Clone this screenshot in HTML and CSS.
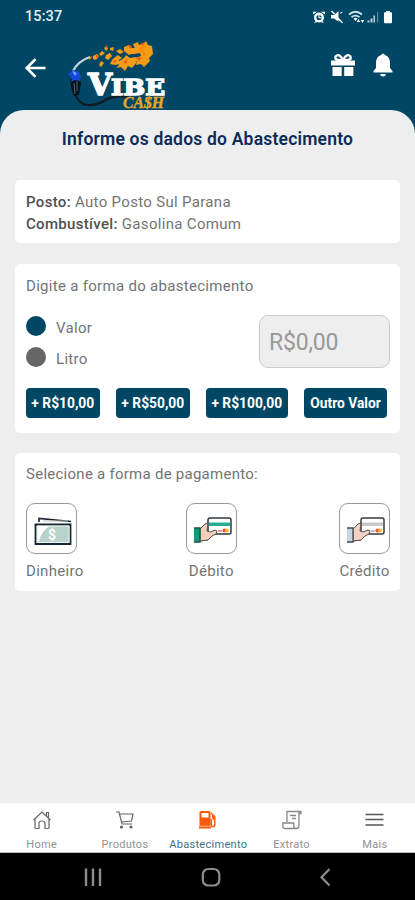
FILE: index.html
```html
<!DOCTYPE html>
<html lang="pt-BR">
<head>
<meta charset="utf-8">
<title>Vibe Cash</title>
<link rel="stylesheet" href="styles.css">
</head>
<body>
<div class="app">
  <header class="header">
    <div class="status">
      <span class="clock">15:37</span>
      <svg class="status-icons" width="82" height="16" viewBox="0 0 82 16" fill="#fff">
        <circle cx="6" cy="8.5" r="3.8" fill="none" stroke="#fff" stroke-width="2.4"/>
        <path d="M0 5.500V2.800h4zM12 5.500V2.800H8zM1 14l2-2.500 1.500 1.500zM11 14l-2-2.500L7.500 13zM5.500 6h1v2.300h2v1h-3z"/>
        <path d="M18 6h3l4.500-4v6.500l4.500 5-1 .8-3.500-3.300v1.500l-4.500-3H18zM18 2.500l1-1 3 3-1 1zM27 4l2-1.500.6.8-2 1.500z"/>
        <path d="M36 5.500q6.500-5.500 13 0M38.500 8.200q4-3.200 8 0" fill="none" stroke="#d4e1e7" stroke-width="1.700"/>
        <path d="M40.500 9.500q2-1.400 4 0l-2 2.500zM45.500 10l1.800 3h-3.600zM49.500 14l-1.800-3h3.600z"/>
        <path d="M54.500 13.500v-2h2v2zM57.500 13.500v-4h2v4zM60.500 13.500v-7H62v7z" fill="#b8cdd8"/>
        <path d="M64 13.500V3h1.200v10.500z" fill="#61879b"/>
        <path d="M73 2h4v1.200h1q1 0 1 1v9q0 1-1 1h-6q-1 0-1-1v-9q0-1 1-1h1z"/>
      </svg>
    </div>
    <div class="toolbar">
      <svg class="back" width="22" height="20" viewBox="0 0 22 20" fill="none" stroke="#fff" stroke-width="2.600"><path d="M20.500 10H2M10.500 1.200L1.700 10l8.800 8.800"/></svg>
      <svg class="logo" width="100" height="72" viewBox="0 0 100 72">
        <path d="M5 31q5-10 17-14" fill="none" stroke="#c9d7df" stroke-width="2"/>
        <path d="M5 40q1 23 14 25 10 1 20-6 14-5 22-1" fill="none" stroke="#111a22" stroke-width="2.200"/>
        <path d="M2 39l9-1 2 5-2 12-5 1q-3-6-4-17z" fill="#07121d"/>
        <path d="M6 43l1 11M9 41v10" stroke="#476779"/>
        <path d="M0 34l5-4 6 2 2 5-1 4-5-1-4 2 1-4z" fill="#1846d8"/>
        <path d="M4 31l5 2-2 3z" fill="#69a4ff"/>
        <path d="M20 18l4-2-2 4zM25 16l4-2 2 2-3 4-3-1zM31 14l3-3 3 2-4 3zM33 21l3 2-3 4-2-2zM38 15l4-2 2 3-4 4-3-2zM36 8l3-2 1 3-2 2zM42 8l4-1-1 4-3-1zM46 18l4-3 4 3-3 2 1 4-5 1-5-1 2-4zM48 11l4-2 4 3-4 2zM50 22l6-4 2-3 4 3 6-1-2 4 3 1-5 6-4-2-3 5-4-4-5 1 3-3zM56 7l5-2 3 3 5-1-2 5-6 3-5-4zM65 4l5-2 1 3 5-2 2-2 2 4 4 1 1 8-4 4 1 3-6 6-3-3-5 1 1-4-4 1 2-4 6-2-1-3-6 1-3-3 4-2z" fill="#f49b18"/>
        <path d="M28 15l3 1-3 2zM37 7l2-2v4zM60 5l4 1-2 3zM72 4l5-2-2 4zM68 17l6 1-3 3zM45 20l4 1-3 2zM55 22l5-3-2 5z" fill="#e75a18"/>
        <path d="M74 5l4 1-3 5 4 3-5 3 1-5-5-1z" fill="#ff8a08"/>
        <text class="logo-v" x="20" y="54.500" textLength="24" lengthAdjust="spacingAndGlyphs">V</text>
        <text class="logo-ibe" x="43" y="54.500" textLength="54" lengthAdjust="spacingAndGlyphs">IBE</text>
        <text class="logo-cash" x="55" y="68" textLength="41" lengthAdjust="spacingAndGlyphs">CA$H</text>
      </svg>
      <svg class="gift" width="26" height="24" viewBox="0 0 26 24"><path d="M1 7.500h24v5H1zM2.500 14h9.200v9H2.500zM14.200 14h9.200v9h-9.200z" fill="#fff"/><path d="M13 7Q4 8 5.500 3.500 9-.5 13 7Q17-.5 20.500 3.500 22 8 13 7z" fill="none" stroke="#fff" stroke-width="2.300"/></svg>
      <svg class="bell" width="20" height="24" viewBox="0 0 20 24" fill="#fff"><path d="M10 .5q1.500 0 1.700 1.500Q17 3.500 17 10v5l2.500 3v1.500H.5V18L3 15v-5Q3 3.500 8.300 2 8.500.5 10 .5zM7 21h6q-.5 2.500-3 2.500T7 21z"/></svg>
    </div>
  </header>
  <main class="sheet">
    <h1 class="title">Informe os dados do Abastecimento</h1>
    <section class="card station">
      <p class="row posto"><b>Posto:</b> Auto Posto Sul Parana</p>
      <p class="row comb"><b>Combustível:</b> Gasolina Comum</p>
    </section>
    <section class="card amount">
      <p class="label digite">Digite a forma do abastecimento</p>
      <div class="entry">
        <div class="options">
          <div class="option"><span class="dot selected"></span><span>Valor</span></div>
          <div class="option"><span class="dot"></span><span>Litro</span></div>
        </div>
        <div class="field">R$0,00</div>
      </div>
      <div class="presets">
        <div class="preset">+ R$10,00</div>
        <div class="preset">+ R$50,00</div>
        <div class="preset wide">+ R$100,00</div>
        <div class="preset other">Outro Valor</div>
      </div>
    </section>
    <section class="card payment">
      <p class="label selecione">Selecione a forma de pagamento:</p>
      <div class="methods">
        <div class="method cash">
          <div class="tile"><svg width="49" height="49" viewBox="0 0 49 49">
            <path d="M12 18v-3.500l32 3" fill="none" stroke="#182533" stroke-width="1.600"/><path d="M16 17h25" stroke="#b8c2c7"/>
            <path d="M8.500 20.500h35V40h-35z" fill="#b9d2ca" stroke="#182533" stroke-width="1.800"/><path d="M10.500 22h12q-7 4-9 14l-3 2z" fill="#fff"/><path d="M12 38q1-9 10-15h20v15z" fill="#b9d2ca"/><path d="M10.200 22h31.800v16.500H10.200z" fill="none" stroke="#edf4f1"/>
            <text class="dollar" x="21" y="35.500">$</text>
          </svg></div>
          <span>Dinheiro</span>
        </div>
        <div class="method debit">
          <div class="tile"><svg width="49" height="49" viewBox="0 0 49 49">
            <path d="M13 25l5-5 5-2 5 10-7 8-8 1z" fill="#f3cfbb" stroke="#59514f"/>
            <rect x="21" y="14" width="23" height="16" rx="2" fill="#fff" stroke="#30373e" stroke-width="1.500"/><path d="M22 18.500h21v3.500H22z" fill="#25ad91"/><path d="M31 27h4" stroke="#f49aa2" stroke-width="2"/><circle cx="37.500" cy="26.500" r="2" fill="#ee5140"/><circle cx="40" cy="26.500" r="2" fill="#ffb52e"/>
            <path d="M21 19l-1 8 3 1 5-2 2 1-1 3-4 2-4 4-8 1" fill="#f3cfbb" stroke="#59514f"/>
            <path d="M7 24h6v14H7z" fill="#129b7a"/><path d="M7 24h6v14H7" fill="none" stroke="#214d49" stroke-width="1.300"/>
          </svg></div>
          <span>Débito</span>
        </div>
        <div class="method credit">
          <div class="tile"><svg width="49" height="49" viewBox="0 0 49 49">
            <path d="M13 25l5-5 5-2 5 10-7 8-8 1z" fill="#f3d2c4" stroke="#59514f"/>
            <rect x="21" y="14" width="23" height="16" rx="2" fill="#fff" stroke="#383b40" stroke-width="1.500"/><path d="M22 18.500h21v3.500H22z" fill="#c8c8c8"/><path d="M31 27h4" stroke="#c6bec2" stroke-width="2"/><circle cx="37.500" cy="26.500" r="2" fill="#ee5140"/><circle cx="40" cy="26.500" r="2" fill="#ffb52e"/>
            <path d="M21 19l-1 8 3 1 5-2 2 1-1 3-4 2-4 4-8 1" fill="#f3d2c4" stroke="#59514f"/>
            <path d="M7 24h6v14H7z" fill="#c6d5e4"/><path d="M7 24h6v14H7" fill="none" stroke="#454b55" stroke-width="1.300"/>
          </svg></div>
          <span>Crédito</span>
        </div>
      </div>
    </section>
  </main>
  <nav class="tabs">
    <div class="tab"><svg width="20" height="20" viewBox="0 0 20 20" fill="none" stroke="#666" stroke-width="1.200"><path d="M1.500 10L10 2l8.500 8M14.500 6V2.500h2V8M3 9v8.500q0 1 1 1h3V13q0-2 3-2t3 2v5.500h3q1 0 1-1V9"/></svg><span>Home</span></div>
    <div class="tab"><svg width="20" height="20" viewBox="0 0 20 20" fill="none" stroke="#666" stroke-width="1.200"><path d="M1 2h3l3 12h10M5 4h13l-1.500 7-10 1"/><circle cx="6.500" cy="17" r="1" fill="#444"/><circle cx="16" cy="17" r="1" fill="#333"/></svg><span>Produtos</span></div>
    <div class="tab active"><svg width="20" height="20" viewBox="0 0 20 20"><path d="M1.500 2.500q0-1.500 1.500-1.500h8q1.500 0 1.500 1.500V16H13v2.500H1V16h.5z" fill="#f85a0c"/><path d="M3.500 3h7v4.500h-7z" fill="#fff"/><path d="M12.500 9H14v6q0 1 1 1t1-1v-5q-2-.5-2-2.500V5L12.500 3.500l1-1 4 4V15q0 2.500-2.500 2.500T12.500 15z" fill="#f85a0c"/><path d="M1 16.200h12" stroke="#fff" stroke-width=".6"/></svg><span>Abastecimento</span></div>
    <div class="tab"><svg width="20" height="20" viewBox="0 0 20 20" fill="none" stroke="#888" stroke-width="1.300"><path d="M5 12V1.500h14v2h-2v12q0 3-2.500 3H3Q.8 18.500.8 16v-3h11v3q0 2.500 2.500 2.500M17 4V1.500M8 5.500h6M10 8.500h4"/></svg><span>Extrato</span></div>
    <div class="tab"><svg width="20" height="20" viewBox="0 0 20 20" stroke="#555" stroke-width="1.500"><path d="M.5 4.500h18M.5 9.500h18M.5 15h18"/></svg><span>Mais</span></div>
  </nav>
  <footer class="sysbar">
    <svg width="18" height="20" viewBox="0 0 18 20" stroke="#8c8c8c" stroke-width="2.400"><path d="M2 1.500v17.500M9 1.500v17.500M16 1.500v17.500"/></svg>
    <svg width="20" height="20" viewBox="0 0 20 20" fill="none" stroke="#8c8c8c" stroke-width="2.200"><rect x="1.800" y="2" width="16.500" height="16.500" rx="5.500"/></svg>
    <svg width="12" height="20" viewBox="0 0 12 20" fill="none" stroke="#8c8c8c" stroke-width="2.200"><path d="M10.500 2L2.500 10.200l8 8.300"/></svg>
  </footer>
</div>
</body>
</html>
```
FILE: styles.css
```css
* { box-sizing: border-box; }
body { margin: 0; font-family: Roboto, "Liberation Sans", sans-serif; color: #747474; }
p, h1 { margin: 0; font-weight: 400; }
svg { display: block; flex: none; overflow: visible; }
.app { width: 415px; height: 900px; display: flex; flex-direction: column; background: #004766; overflow: hidden; }
.header { height: 110px; flex: none; }
.status { height: 34px; display: flex; justify-content: space-between; align-items: center; padding: 0 20px 0 25px; }
.clock { font-size: 14.5px; line-height: 16px; color: #e2edf2; font-weight: 500; letter-spacing: .1px; }
.toolbar { height: 76px; display: flex; align-items: flex-start; padding: 6px 22px 0 25px; }
.back { margin-top: 18px; }
.logo { margin-left: 21px; }
.gift { margin-left: auto; margin-top: 13px; margin-right: 1px; }
.bell { margin-left: 16px; margin-top: 13px; }
.logo-v, .logo-ibe { fill: #fff; stroke: #fff; stroke-width: 1.400px; font-family: "DejaVu Serif", serif; font-weight: 700; }
.logo-v { font-size: 29px; }
.logo-ibe { font-size: 22px; }
.logo-cash { fill: #e9a829; stroke: #e9a829; stroke-width: .4px; font: italic 700 17px "Liberation Serif", serif; }
.sheet { flex: 1; background: #eee; border-radius: 24px 24px 0 0; padding: 17px 15px 0; }
.title { height: 53px; text-align: center; color: #092c59; font-size: 17.5px; line-height: 25px; font-weight: 600; letter-spacing: .2px; }
.card { background: #fff; border-radius: 5px; padding-left: 11px; padding-right: 10px; }
.station { height: 63px; padding-top: 12px; margin-bottom: 21px; }
.row { font-size: 15px; line-height: 21.500px; letter-spacing: .32px; white-space: nowrap; }
.row b { font-weight: 500; color: #505050; }
.amount { height: 169px; padding-top: 11px; margin-bottom: 20px; }
.label { font-size: 15px; line-height: 22px; letter-spacing: .3px; white-space: nowrap; }
.label.selecione { letter-spacing: .26px; margin-top: -1px; }
.entry { display: flex; justify-content: space-between; margin-top: 18px; height: 53px; }
.options { display: flex; flex-direction: column; gap: 11px; padding-top: 1px; }
.option { display: flex; align-items: center; gap: 10px; height: 20px; font-size: 15px; letter-spacing: .3px; }
.option span:last-child { padding-top: 3px; }
.dot { width: 20px; height: 20px; border-radius: 50%; background: #666; }
.dot.selected { background: #004766; }
.field { width: 131px; height: 53px; border: 1px solid #ccc; border-radius: 9px; background: #eee; color: #999; font-size: 23px; line-height: 54px; padding-left: 9px; letter-spacing: -.2px; }
.presets { display: flex; margin-top: 20px; gap: 16.500px; }
.preset { width: 73.500px; height: 30px; border-radius: 4px; background: #004766; color: #fff; font-size: 13.800px; line-height: 31px; font-weight: 700; text-align: center; white-space: nowrap; }
.preset.wide { width: 81.500px; }
.preset.other { width: 83px; }
.payment { height: 138px; padding-top: 11px; }
.methods { display: flex; justify-content: space-between; margin-top: 18px; }
.method { display: flex; flex-direction: column; align-items: center; font-size: 15px; line-height: 20px; letter-spacing: .3px; gap: 7px; }
.method.cash { align-items: flex-start; }
.tile { width: 51px; height: 51px; border: 1px solid #999; border-radius: 9px; }
.dollar { font: 700 14px Roboto, sans-serif; fill: #fff; }
.tabs { height: 50px; flex: none; background: #fff; display: grid; grid-template-columns: repeat(5, 83.300px); border-bottom: 1px solid #bbb; border-top: 1px solid #f8f8f8; }
.tab { display: flex; flex-direction: column; align-items: center; padding-top: 6px; gap: 8px; font-size: 11px; line-height: 14px; letter-spacing: .3px; color: #919191; }
.tab.active { color: #3b7384; }
.sysbar { height: 47px; flex: none; background: #000; display: flex; align-items: center; padding: 0 84px; justify-content: space-between; }
```
